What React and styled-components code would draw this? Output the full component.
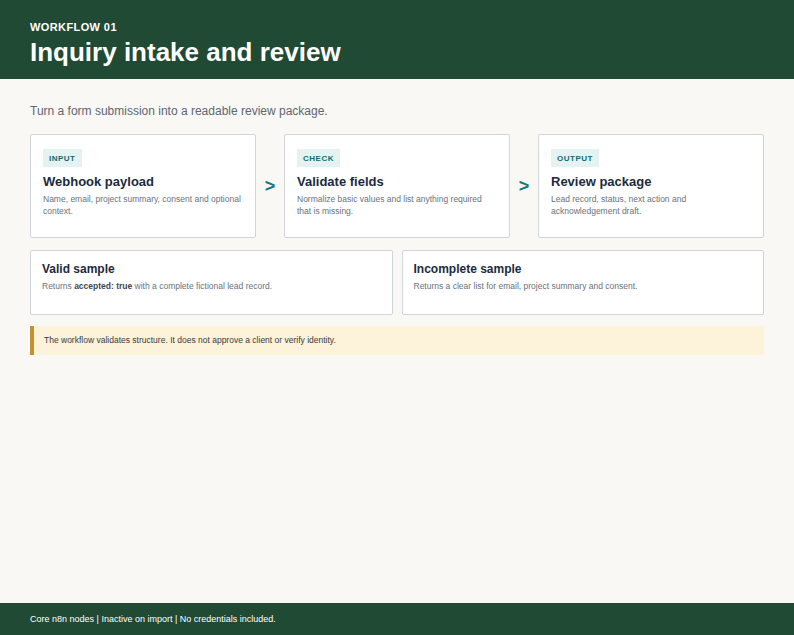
import styled, { createGlobalStyle } from "styled-components";

const Global = createGlobalStyle`
  html, body { margin: 0; padding: 0; }
  body { font-family: "Liberation Sans", Arial, sans-serif; background: #faf8f4; }
`;

const Page = styled.div`
  min-height: 635px;
  display: flex;
  flex-direction: column;
`;

const Header = styled.header`
  background: #214a35;
  color: #fff;
  height: 79px;
  box-sizing: border-box;
  padding: 21px 30px 0;
  .eyebrow {
    font-size: 11px;
    font-weight: 700;
    letter-spacing: 0.4px;
  }
  h1 {
    margin: 4px 0 0;
    font-size: 26px;
    font-weight: 700;
  }
`;

const Main = styled.main`
  flex: 1;
  padding: 25px 30px 0;
`;

const Intro = styled.p`
  margin: 0 0 16px;
  font-size: 12px;
  color: #5e6670;
`;

const Steps = styled.div`
  display: grid;
  grid-template-columns: 1fr 14px 1fr 14px 1fr;
  gap: 7px;
  align-items: center;
`;

const Card = styled.div`
  background: #fff;
  border: 1px solid #cfd5da;
  border-radius: 2px;
  box-sizing: border-box;
  height: ${p => p.$h}px;
  padding: ${p => p.$pad};
  h2 {
    margin: 0 0 5px;
    font-size: ${p => p.$title}px;
    font-weight: 700;
    color: #1b2b3c;
  }
  p {
    margin: 0;
    font-size: 8.5px;
    line-height: 1.4;
    color: #6a727b;
  }
  b { color: #3e4650; }
`;

const Tag = styled.span`
  display: inline-block;
  background: #e4f2f2;
  color: #126b6c;
  font-size: 8px;
  font-weight: 700;
  letter-spacing: 0.5px;
  padding: 5px 6px 4px;
  margin-bottom: 7px;
`;

const Arrow = styled.span`
  color: #127a7b;
  font-size: 18px;
  font-weight: 700;
  text-align: center;
`;

const Samples = styled.div`
  display: grid;
  grid-template-columns: 1fr 1fr;
  gap: 9px;
  margin-top: 12px;
`;

const Note = styled.div`
  margin-top: 11px;
  background: #fdf2da;
  border-left: 4px solid #c3922f;
  padding: 9px 10px 10px;
  font-size: 8.5px;
  color: #3a3a3a;
`;

const Footer = styled.footer`
  background: #214a35;
  color: #fff;
  height: 32px;
  display: flex;
  align-items: center;
  padding: 0 30px;
  font-size: 9px;
`;

const steps = [
  ["INPUT", "Webhook payload", "Name, email, project summary, consent and optional context."],
  ["CHECK", "Validate fields", "Normalize basic values and list anything required that is missing."],
  ["OUTPUT", "Review package", "Lead record, status, next action and acknowledgement draft."],
];

export default function App() {
  return (
    <Page>
      <Global />
      <Header>
        <div className="eyebrow">WORKFLOW 01</div>
        <h1>Inquiry intake and review</h1>
      </Header>
      <Main>
        <Intro>Turn a form submission into a readable review package.</Intro>
        <Steps>
          {steps.map(([tag, title, text], i) => (
            <>
              {i > 0 && <Arrow key={"a" + i}>&gt;</Arrow>}
              <Card key={tag} $h={104} $pad="12px 12px" $title={13}>
                <Tag>{tag}</Tag>
                <h2>{title}</h2>
                <p>{text}</p>
              </Card>
            </>
          ))}
        </Steps>
        <Samples>
          <Card $h={65} $pad="11px 11px" $title={12}>
            <h2>Valid sample</h2>
            <p>Returns <b>accepted: true</b> with a complete fictional lead record.</p>
          </Card>
          <Card $h={65} $pad="11px 11px" $title={12}>
            <h2>Incomplete sample</h2>
            <p>Returns a clear list for email, project summary and consent.</p>
          </Card>
        </Samples>
        <Note>The workflow validates structure. It does not approve a client or verify identity.</Note>
      </Main>
      <Footer>Core n8n nodes | Inactive on import | No credentials included.</Footer>
    </Page>
  );
}
